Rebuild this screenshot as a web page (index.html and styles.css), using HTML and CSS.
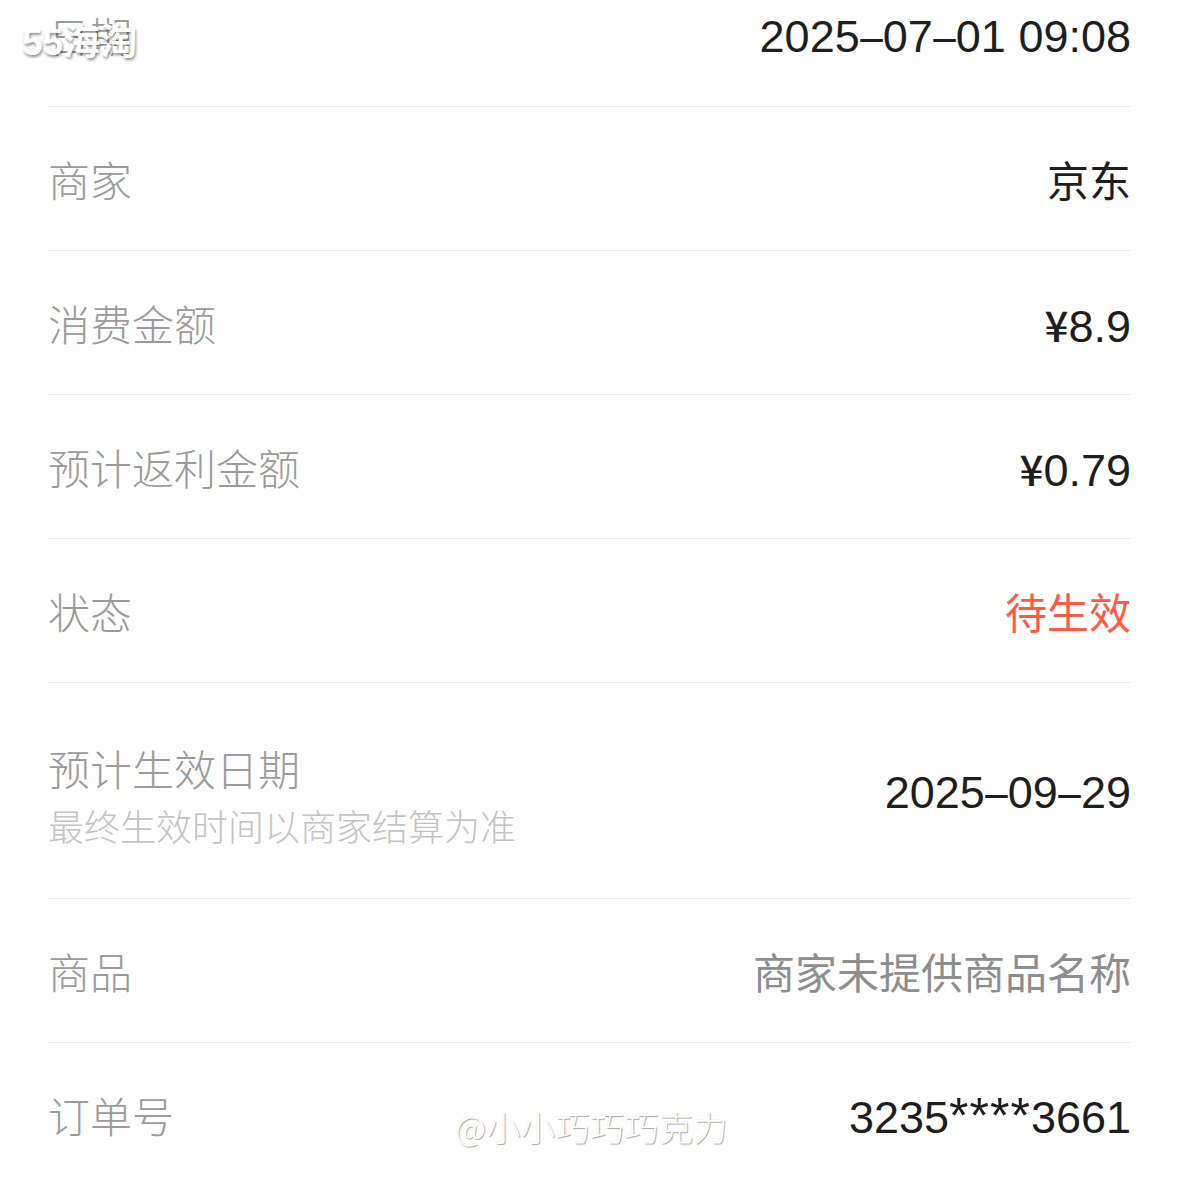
FILE: index.html
```html
<!DOCTYPE html>
<html lang="zh-CN">
<head>
<meta charset="utf-8">
<title>订单详情</title>
<link rel="stylesheet" href="styles.css">
</head>
<body>
<div class="page">
  <div class="list">
    <div class="row">
      <div class="label">日期</div>
      <div class="value num">2025<span class="dash">–</span>07<span class="dash">–</span>01 09:08</div>
    </div>
    <div class="row">
      <div class="label">商家</div>
      <div class="value">京东</div>
    </div>
    <div class="row">
      <div class="label">消费金额</div>
      <div class="value num"><span class="yen">¥</span>8.9</div>
    </div>
    <div class="row">
      <div class="label">预计返利金额</div>
      <div class="value num"><span class="yen">¥</span>0.79</div>
    </div>
    <div class="row">
      <div class="label">状态</div>
      <div class="value red">待生效</div>
    </div>
    <div class="row tall">
      <div class="labels">
        <div class="label">预计生效日期</div>
        <div class="sub">最终生效时间以商家结算为准</div>
      </div>
      <div class="value num">2025<span class="dash">–</span>09<span class="dash">–</span>29</div>
    </div>
    <div class="row">
      <div class="label">商品</div>
      <div class="value muted">商家未提供商品名称</div>
    </div>
    <div class="row">
      <div class="label">订单号</div>
      <div class="value num">3235<span class="stars">****</span>3661</div>
    </div>
  </div>
  <div class="wm-top">55海淘</div>
  <div class="wm-bottom">@小小巧巧巧克力</div>
</div>
</body>
</html>
```
FILE: styles.css
```css
html, body {
  margin: 0;
  padding: 0;
  background: #ffffff;
  overflow: hidden;
}
.page {
  position: relative;
  width: 1179px;
  height: 1179px;
  overflow: hidden;
  font-family: "Noto Sans CJK SC", sans-serif;
}
.list {
  margin-top: -37px;
  padding: 0 48px;
}
.row {
  height: 144px;
  display: flex;
  align-items: center;
  justify-content: space-between;
  border-bottom: 1px solid #ebebeb;
  box-sizing: border-box;
}
.row.tall {
  height: 216px;
}
.labels {
  display: flex;
  flex-direction: column;
  gap: 8px;
  margin-top: 8px;
}
.label {
  font-size: 42px;
  line-height: 52px;
  font-weight: 300;
  color: #9b9b9b;
}
.sub {
  font-size: 36px;
  line-height: 46px;
  font-weight: 300;
  color: #c4c4c4;
}
.value {
  font-size: 42px;
  line-height: 52px;
  color: #1e1e1e;
  text-align: right;
}
.num {
  font-family: "Liberation Sans", "Noto Sans CJK SC", sans-serif;
  font-size: 45px;
  padding-top: 5px;
}
.dash {
  display: inline-block;
  transform: scaleX(0.9);
  margin: 0 -1px;
}
.stars {
  font-size: 50px;
  letter-spacing: 1px;
}
.yen {
  font-family: "Noto Sans CJK SC", sans-serif;
  font-weight: 500;
  font-size: 42px;
}
.red {
  color: #ff5a43;
}
.muted {
  color: #8e8e8e;
}
.wm-top {
  position: absolute;
  left: 22px;
  top: 12px;
  font-family: "Liberation Sans", "Noto Sans CJK SC", sans-serif;
  font-weight: 700;
  font-size: 37px;
  letter-spacing: 0;
  color: #ffffff;
  text-shadow: 1px 2px 3px rgba(0, 0, 0, 0.45);
}
.wm-bottom {
  position: absolute;
  left: 455px;
  top: 1102px;
  font-family: "Noto Sans CJK SC", sans-serif;
  font-weight: 300;
  font-size: 34px;
  letter-spacing: 0.5px;
  color: #ffffff;
  text-shadow: 1px 1px 1px rgba(0, 0, 0, 0.35), -1px -1px 0 rgba(0, 0, 0, 0.05);
}
```
